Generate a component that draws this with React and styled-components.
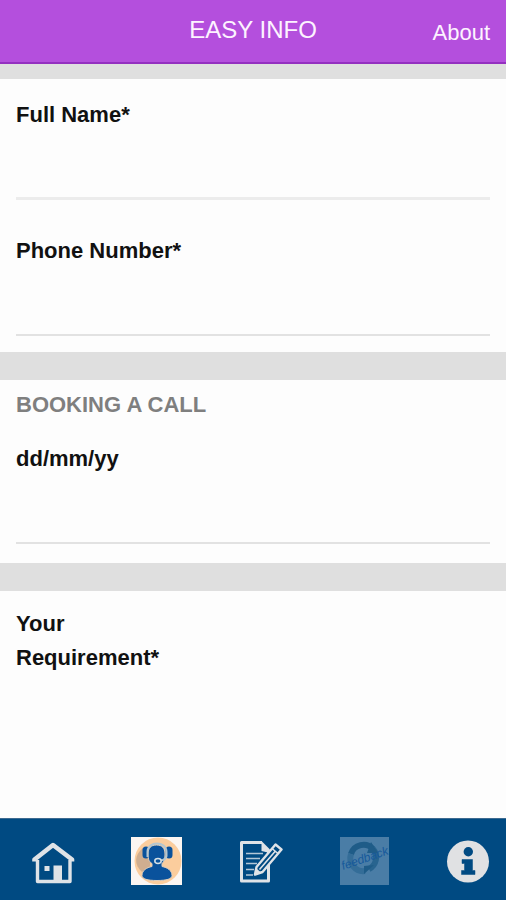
import React from 'react'
import styled, { createGlobalStyle } from "styled-components";

const GlobalStyle = createGlobalStyle`
* {
  box-sizing: border-box;
}

body {
  margin: 0;
  background: #fdfdfd;
  font-family: "Liberation Sans", Arial, Helvetica, sans-serif;
}
`;

function Field({ id, label, type, line }) {
    return (
        <FieldWrapper>
            <Label htmlFor={id}>{label}</Label>
            <TextInput id={id} name={id} type={type || "text"} $line={line} />
        </FieldWrapper>
    )
}

function HomeIcon() {
    return (
        <Icon viewBox="0 0 52 52" aria-hidden="true">
            <path d="M10.5 24V45.5H43V24" fill="none" stroke="#dfe3e7" strokeWidth="3.4" strokeLinejoin="round" />
            <path d="M7.500 25.500V23.500L26 9L45 23.500V25.500" fill="none" stroke="#dfe3e7" strokeWidth="4.6" strokeLinejoin="round" />
            <rect x="26.5" y="29.5" width="8.5" height="16" fill="#dfe3e7" />
            <rect x="17.5" y="30" width="5" height="5" fill="#dfe3e7" />
        </Icon>
    )
}

function AgentIcon() {
    return (
        <Icon viewBox="0 0 52 52" aria-hidden="true">
            <rect x="0" y="1" width="51" height="48" fill="#fbf6f2" />
            <circle cx="27" cy="25" r="23.5" fill="#fbcd9d" />
            <path d="M12 12C3 19 3 29 11 36L19 32V15Z" fill="#cfae90" />
            <rect x="11.5" y="10.5" width="7" height="12" rx="3.5" fill="#0a529c" />
            <rect x="34.5" y="10.5" width="7" height="12" rx="3.500" fill="#0a529c" />
            <path d="M17 18C17 12 20 9 25.500 9C31 9 34 12 34 18C34 24 32.500 26 31 27.500V30.500C36.500 31.500 41 34.500 41 39.500C41 43 35.500 44.500 26 44.500C16.500 44.500 11 43 11 39.500C11 34.500 15.500 31.500 21 30.500V27.500C18.500 26 17 24 17 18Z" fill="#0a529c" stroke="#dfcfbd" strokeWidth="1" />
            <path d="M16.500 21V16C16.500 4.500 35.500 4.500 35.500 16V20C35 23 32.500 24 30 24.500" fill="none" stroke="#b4c6d0" strokeWidth="2" />
            <ellipse cx="27" cy="25" rx="3.2" ry="2.4" fill="#0a529c" stroke="#d5e0e6" strokeWidth="1.500" />
        </Icon>
    )
}

function NoteIcon() {
    return (
        <Icon viewBox="0 0 52 52" aria-hidden="true">
            <path d="M33.5 15V45H6.5V6.5H27" fill="none" stroke="#dfe3e7" strokeWidth="3" strokeLinejoin="round" />
            <path d="M26.5 5L35 13.500V17L26.500 15Z" fill="#dfe3e7" />
            <path d="M11 17.500H28M11 22.500H25M11 27.500H22M11 33.500H19M11 39H18" stroke="#b4c7d7" strokeWidth="1.600" />
            <path d="M20 38.500L21.500 31L40.500 8.500L46.500 13.500L27.500 36Z" fill="#004a82" stroke="#dfe3e7" strokeWidth="2.4" strokeLinejoin="round" />
            <path d="M37 12.500L43 17.500M24.500 33.500L40 15.500" stroke="#dfe3e7" strokeWidth="1.600" />
            <path d="M20 38.500L21.500 32.500L26 36.500Z" fill="#dfe3e7" />
        </Icon>
    )
}

function FeedbackIcon() {
    return (
        <Icon viewBox="0 0 52 52" aria-hidden="true">
            <rect x="2" y="1" width="49" height="48" fill="#4a7da6" />
            <g fill="none" strokeWidth="6">
                <path d="M13 18A13 13 0 0 1 35 13" stroke="#1f5c88" />
                <path d="M35 13A13 13 0 0 1 31 33" stroke="#28648f" />
                <path d="M27 35A13 13 0 0 1 13 18" stroke="#346d98" />
            </g>
            <path d="M33 6L40 17L29 17ZM36 29L26 38V30Z" fill="#1f5c88" />
            <FeedbackText x="5" y="34" transform="rotate(-19 5 34)">feedback</FeedbackText>
        </Icon>
    )
}

function InfoIcon() {
    return (
        <Icon viewBox="0 0 52 52" aria-hidden="true">
            <circle cx="26" cy="25.5" r="21" fill="#e0e1e3" />
            <circle cx="26.300" cy="15.700" r="4.700" fill="#004a82" />
            <path d="M20 23.500H30.500V34.500H33V38.500H19.500V34.500H22.500V27.500H20Z" fill="#004a82" stroke="#004a82" strokeWidth="0.500" strokeLinejoin="round" />
        </Icon>
    )
}

function App() {
    return (
        <Page>
            <GlobalStyle />
            <Header>
                <Title>EASY INFO</Title>
                <AboutLink href="#about">About</AboutLink>
            </Header>
            <Form>
                <Section $top={19} $bottom={16}>
                    <Field id="name" label="Full Name*" line={3} />
                    <Field id="phone" label="Phone Number*" type="tel" line={2} />
                </Section>
                <Divider />
                <Section $top={8} $bottom={19}>
                    <SectionTitle>BOOKING A CALL</SectionTitle>
                    <Field id="date" label="dd/mm/yy" line={2} />
                </Section>
                <Divider />
                <Section $top={16} $bottom={16} $grow>
                    <NarrowLabel htmlFor="requirement">Your Requirement*</NarrowLabel>
                    <TextArea id="requirement" name="requirement" />
                </Section>
            </Form>
            <NavBar>
                <NavButton type="button" aria-label="Home"><HomeIcon /></NavButton>
                <NavButton type="button" aria-label="Book a call"><AgentIcon /></NavButton>
                <NavButton type="button" aria-label="Notes"><NoteIcon /></NavButton>
                <NavButton type="button" aria-label="Feedback"><FeedbackIcon /></NavButton>
                <NavButton type="button" aria-label="Info"><InfoIcon /></NavButton>
            </NavBar>
        </Page>
    )
}

const Page = styled.div`
  display: flex;
  flex-direction: column;
  min-height: 100vh;
`;

const Header = styled.header`
  display: grid;
  grid-template-columns: 1fr auto 1fr;
  align-items: center;
  height: 64px;
  padding: 0 16px;
  background: #b44fdd;
  border-bottom: 2px solid #9430c0;
  color: #fdf3ff;
`;

const Title = styled.h1`
  grid-column: 2;
  margin: 0;
  padding-bottom: 2px;
  font-size: 24px;
  font-weight: normal;
  line-height: 32px;
`;

const AboutLink = styled.a`
  justify-self: end;
  padding-top: 4px;
  color: inherit;
  font-size: 22px;
  line-height: 32px;
  text-decoration: none;
`;

const Form = styled.form`
  display: flex;
  flex: 1;
  flex-direction: column;
  border-top: 15px solid #dfdfdf;
`;

const Section = styled.section`
  display: flex;
  flex-direction: column;
  flex-grow: ${(props) => (props.$grow ? 1 : 0)};
  gap: ${(props) => (props.$grow ? 0 : 34)}px;
  padding: ${(props) => props.$top}px 16px ${(props) => props.$bottom}px;
`;

const Divider = styled.div`
  height: 28px;
  background: #dfdfdf;
`;

const SectionTitle = styled.h2`
  margin: 0 0 -14px;
  color: #7f7f7f;
  font-size: 22px;
  line-height: 34px;
`;

const FieldWrapper = styled.div`
  display: flex;
  flex-direction: column;
`;

const Label = styled.label`
  color: #111;
  font-size: 22px;
  font-weight: bold;
  line-height: 34px;
`;

const NarrowLabel = styled(Label)`
  max-width: 160px;
`;

const TextInput = styled.input`
  width: 100%;
  height: 68px;
  padding: 0;
  border: 0;
  border-bottom: ${(props) => props.$line}px solid ${(props) => (props.$line > 2 ? "#ececec" : "#e2e2e2")};
  border-radius: 0;
  outline: none;
  background: transparent;
  font: inherit;
  font-size: 22px;
`;

const TextArea = styled.textarea`
  flex: 1;
  width: 100%;
  min-height: 68px;
  padding: 0;
  border: 0;
  outline: none;
  resize: none;
  background: transparent;
  font: inherit;
  font-size: 22px;
`;

const NavBar = styled.nav`
  display: flex;
  align-items: center;
  justify-content: space-between;
  height: 82px;
  padding: 4px 12px 0 27px;
  background: #004a82;
  border-top: 1px solid #3d6a90;
`;

const NavButton = styled.button`
  display: flex;
  width: 52px;
  height: 52px;
  padding: 0;
  border: 0;
  background: none;
  cursor: pointer;
`;

const Icon = styled.svg`
  width: 52px;
  height: 52px;
`;

const FeedbackText = styled.text`
  fill: #16599b;
  font-size: 12px;
  font-style: italic;
`;

export default App;
